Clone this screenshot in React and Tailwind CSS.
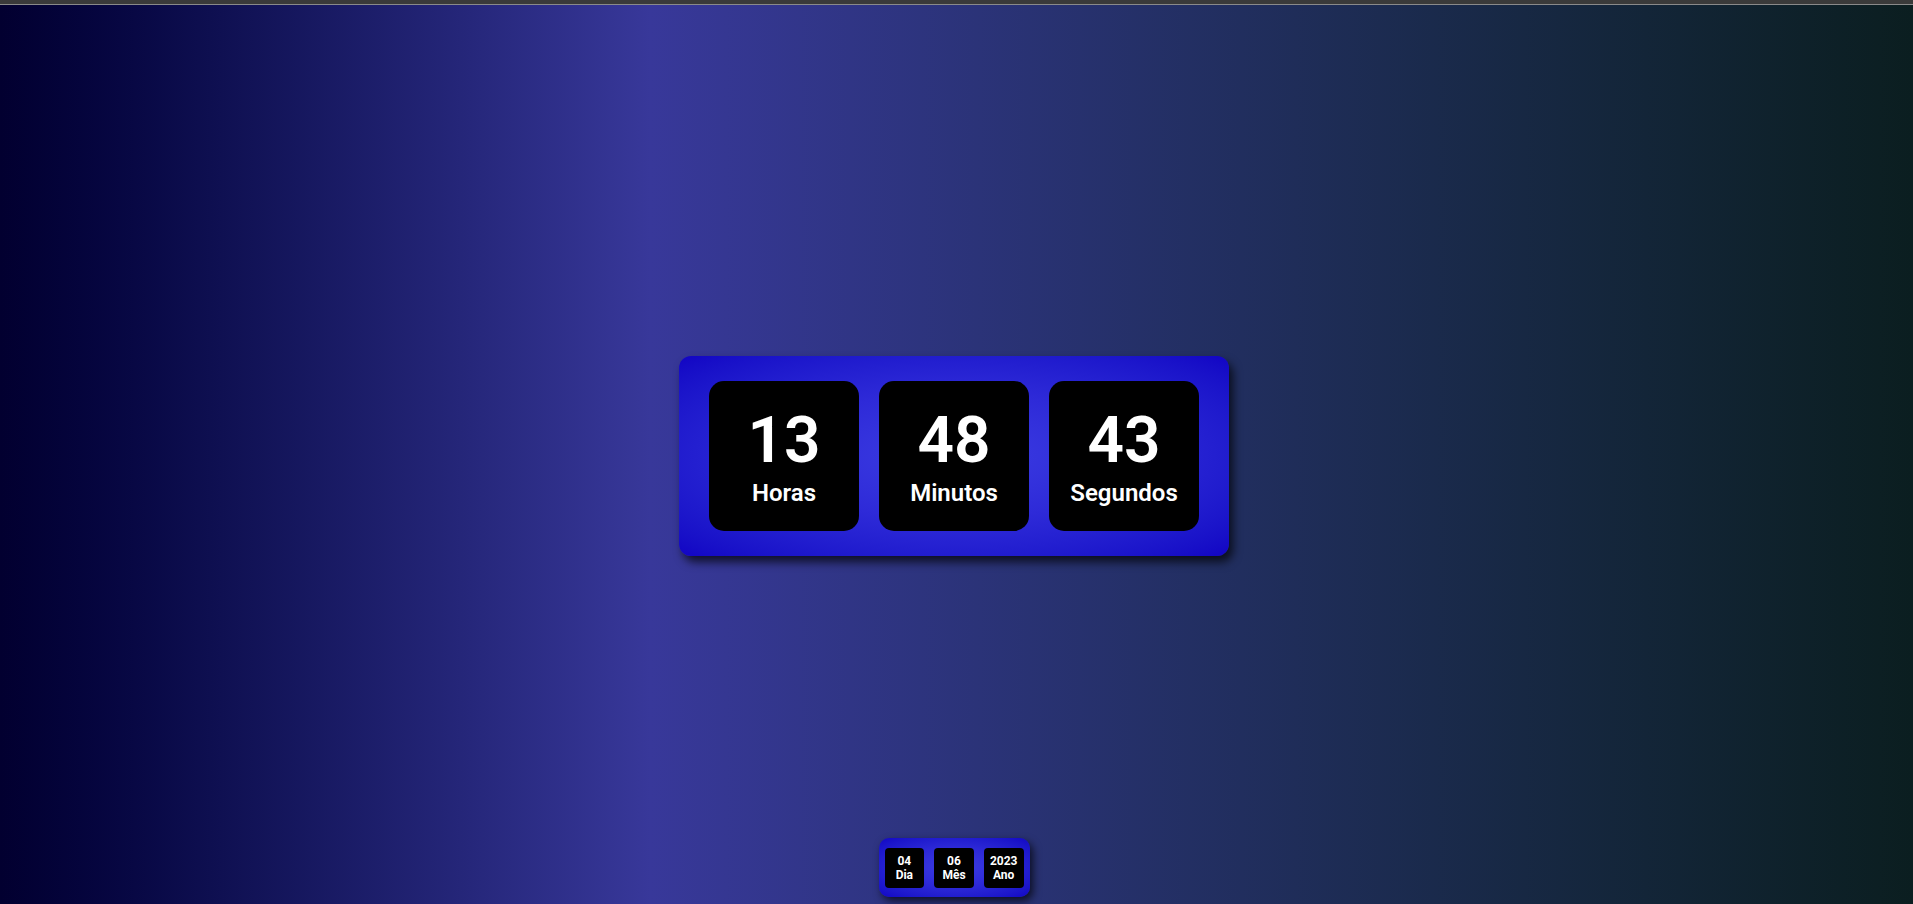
const Tile = ({ value, label }) => (
  <div className="w-[150px] h-[150px] bg-black rounded-[15px] flex flex-col items-center justify-center text-white">
    <span className="text-[64px] leading-[64px] font-semibold mt-[4px]">{value}</span>
    <span className="text-[24px] leading-[28px] font-semibold mt-[6px]">{label}</span>
  </div>
);

const MiniTile = ({ value, label }) => (
  <div className="w-[40px] h-[40px] bg-black rounded-[4px] flex flex-col items-center justify-center text-white text-[12px] leading-[14px] font-bold">
    <span>{value}</span>
    <span>{label}</span>
  </div>
);

const App = () => {
  return (
    <div className="w-full h-screen overflow-hidden flex flex-col font-['Roboto',sans-serif] bg-linear-to-r from-[#020030] via-[#38389a] via-34% to-[#0b1e20]">
      <div className="h-[4px] bg-[#3a3a3a] border-b border-[#8a8a8a] box-content" />

      <main className="flex-1 flex flex-col items-center pt-[351px] pr-[5px]">
        <section className="w-[550px] h-[200px] rounded-[12px] px-[30px] py-[25px] flex gap-[20px] bg-radial from-[#3c3ce2] via-[#2e2ad8] via-45% to-[#1204c4] shadow-[4px_6px_10px_rgba(0,0,0,0.7)]">
          <Tile value="13" label="Horas" />
          <Tile value="48" label="Minutos" />
          <Tile value="43" label="Segundos" />
        </section>

        <footer className="mt-auto mb-[7px] w-[151px] h-[59px] rounded-[10px] px-[6px] flex items-center gap-[10px] bg-radial from-[#3c3ce2] via-[#2e2ad8] via-45% to-[#1204c4] shadow-[3px_4px_8px_rgba(0,0,0,0.7)]">
          <MiniTile value="04" label="Dia" />
          <MiniTile value="06" label="Mês" />
          <MiniTile value="2023" label="Ano" />
        </footer>
      </main>
    </div>
  );
};

export default App;
